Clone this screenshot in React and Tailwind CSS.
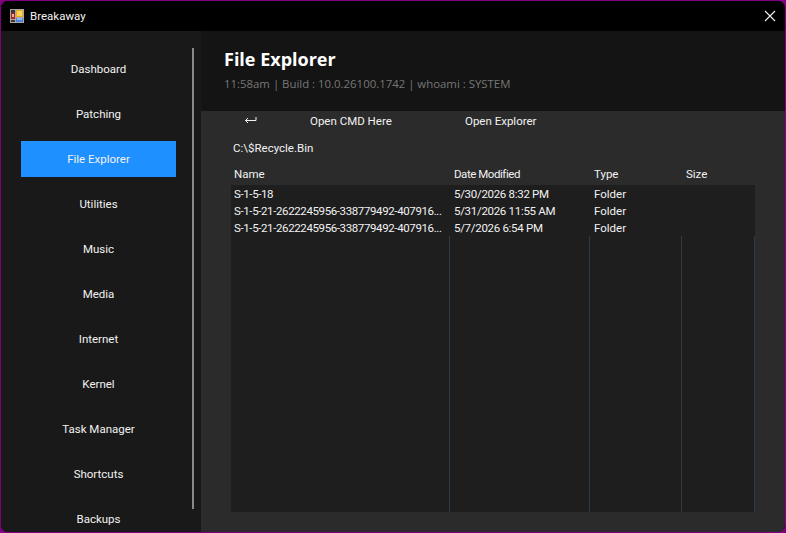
const nav = ["Dashboard","Patching","File Explorer","Utilities","Music","Media","Internet","Kernel","Task Manager","Shortcuts","Backups"];

const rows = [
  ["S-1-5-18", "5/30/2026 8:32 PM", "Folder"],
  ["S-1-5-21-2622245956-338779492-407916...", "5/31/2026 11:55 AM", "Folder"],
  ["S-1-5-21-2622245956-338779492-407916...", "5/7/2026 6:54 PM", "Folder"],
];

function AppIcon() {
  return (
    <svg width="14" height="14" viewBox="0 0 14 14" shapeRendering="crispEdges" className="shrink-0 mb-[1px]">
      <rect x="0" y="0" width="14" height="14" fill="#a8a8a8" />
      <rect x="1" y="1" width="4" height="3" fill="#3a3a3a" />
      <rect x="1" y="4" width="4" height="6" fill="#b02020" />
      <rect x="2" y="5" width="2" height="3" fill="#e8b090" />
      <rect x="1" y="11" width="4" height="2" fill="#3a3a3a" />
      <rect x="6" y="1" width="7" height="7" fill="#e8a820" />
      <rect x="7" y="2" width="5" height="5" fill="#fbd35a" />
      <rect x="6" y="9" width="7" height="4" fill="#4f7fd0" />
      <rect x="7" y="9" width="5" height="2" fill="#90b8f0" />
    </svg>
  );
}

function Cell({ w, children, track = "" }) {
  return <div className={`${w} shrink-0 whitespace-nowrap ${track}`}>{children}</div>;
}

export default function App() {
  return (
    <div className="w-[786px] h-[533px] overflow-hidden bg-[#800080] font-['Roboto','Noto_Sans',sans-serif] text-[11.5px] text-[#f2f2f2]">
      <div className="m-[1px] h-[531px] rounded-[7px] overflow-hidden flex flex-col bg-black">
        <div className="h-[30px] shrink-0 bg-black flex items-center pl-[9px] pr-[9px]">
          <AppIcon />
          <span className="ml-[6px] pt-[1px]">Breakaway</span>
          <svg width="12" height="12" viewBox="0 0 12 12" className="ml-auto" stroke="#f0f0f0" strokeWidth="1.1">
            <path d="M1 1 L11 11 M11 1 L1 11" />
          </svg>
        </div>
        <div className="flex-1 min-h-0 flex">
          <aside className="relative w-[200px] shrink-0 bg-[#191919] overflow-hidden pl-[20px] pt-[20px] flex flex-col gap-[9px]">
            {nav.map((n) => (
              <div
                key={n}
                className={`w-[155px] h-[36px] shrink-0 pt-[1px] flex items-center justify-center ${n === "File Explorer" ? "bg-[#1e90ff]" : ""}`}
              >
                {n}
              </div>
            ))}
            <div className="absolute left-[191px] top-[17px] w-[2px] h-[461px] bg-[#8a8a8a]" />
          </aside>
          <main className="flex-1 min-w-0 flex flex-col">
            <header className="h-[80px] shrink-0 bg-[#141414] pl-[23px] pt-[15px]">
              <h1 className="font-['Open_Sans',sans-serif] text-[18px] leading-[26px] font-bold text-white">File Explorer</h1>
              <p className="font-['Open_Sans',sans-serif] text-[11.4px] leading-[18px] mt-[3px] text-[#777777]">11:58am | Build : 10.0.26100.1742 | whoami : SYSTEM</p>
            </header>
            <section className="flex-1 min-h-0 bg-[#2b2b2b] flex flex-col pl-[30px] pr-[30px] pb-[20px]">
              <div className="h-[20px] shrink-0 flex items-center">
                <span className="w-[79px] pl-[13px] shrink-0 flex mb-[2px]">
                  <svg width="13" height="8" viewBox="0 0 13 8" fill="none" stroke="#f2f2f2" strokeWidth="1">
                    <path d="M12 1 V4.5 H1.5 M4 2 L1.5 4.5 L4 7" />
                  </svg>
                </span>
                <span className="w-[155px] shrink-0 pt-[1px]">Open CMD Here</span>
                <span className="pt-[1px]">Open Explorer</span>
              </div>
              <div className="h-[34px] shrink-0 pl-[2px] pt-[8px] leading-[18px]">C:\$Recycle.Bin</div>
              <div className="h-[20px] shrink-0 flex items-center pl-[3px]">
                <Cell w="w-[220px]">Name</Cell>
                <Cell w="w-[140px]" track="tracking-[-0.45px]">Date Modified</Cell>
                <Cell w="w-[92px]">Type</Cell>
                <Cell w="w-[60px]">Size</Cell>
              </div>
              <div className="flex-1 min-h-0 bg-[#1e1e1e] flex flex-col">
                <div className="h-[51px] shrink-0 flex flex-col">
                  {rows.map((r, i) => (
                    <div key={i} className="h-[17px] shrink-0 pt-[2px] flex items-center pl-[3px]">
                      <Cell w="w-[220px]" track="tracking-[-0.38px]">{r[0]}</Cell>
                      <Cell w="w-[140px]" track="tracking-[-0.3px]">{r[1]}</Cell>
                      <Cell w="w-[92px]">{r[2]}</Cell>
                    </div>
                  ))}
                </div>
                <div className="flex-1 flex">
                  <div className="w-[219px] shrink-0 border-r border-[#2d3a48]" />
                  <div className="w-[140px] shrink-0 border-r border-[#2d3a48]" />
                  <div className="w-[92px] shrink-0 border-r border-[#2d3a48]" />
                  <div className="w-[73px] shrink-0 border-r border-[#2d3a48]" />
                </div>
              </div>
            </section>
          </main>
        </div>
      </div>
    </div>
  );
}
